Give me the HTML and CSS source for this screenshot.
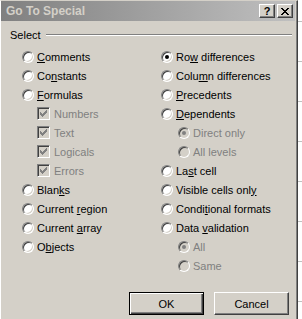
FILE: index.html
```html
<!DOCTYPE html>
<html>
<head>
<meta charset="utf-8">
<link rel="stylesheet" href="styles.css">
</head>
<body>
<div class="dialog">
  <div class="titlebar">
    <span class="title">Go To Special</span>
    <div class="tbtns">
      <span class="tbtn help">?</span>
      <span class="tbtn close">
        <svg width="8" height="7" viewBox="0 0 8 7" shape-rendering="crispEdges"><path d="M0 0h2v1H0zM6 0h2v1H6zM1 1h2v1H1zM5 1h2v1H5zM2 2h4v1H2zM3 3h2v1H3zM2 4h4v1H2zM1 5h2v1H1zM5 5h2v1H5zM0 6h2v1H0zM6 6h2v1H6z" fill="#000"/></svg>
      </span>
    </div>
  </div>
  <div class="legend"><span class="legend-text">Select</span><span class="rule"></span></div>
  <div class="cols">
    <div class="col">
      <div class="opt"><span class="radio"></span><span><u>C</u>omments</span></div>
      <div class="opt"><span class="radio"></span><span>Co<u>n</u>stants</span></div>
      <div class="opt"><span class="radio"></span><span><u>F</u>ormulas</span></div>
      <div class="opt sub dis"><span class="check"><svg width="7" height="7" viewBox="0 0 7 7" shape-rendering="crispEdges"><path d="M6 0h1v1H6zM5 1h2v1H5zM0 2h1v1H0zM4 2h3v1H4zM0 3h2v1H0zM3 3h3v1H3zM0 4h5v1H0zM1 5h3v1H1zM2 6h1v1H2z" fill="#808080"/></svg></span><span>Numbers</span></div>
      <div class="opt sub dis"><span class="check"><svg width="7" height="7" viewBox="0 0 7 7" shape-rendering="crispEdges"><path d="M6 0h1v1H6zM5 1h2v1H5zM0 2h1v1H0zM4 2h3v1H4zM0 3h2v1H0zM3 3h3v1H3zM0 4h5v1H0zM1 5h3v1H1zM2 6h1v1H2z" fill="#808080"/></svg></span><span>Text</span></div>
      <div class="opt sub dis"><span class="check"><svg width="7" height="7" viewBox="0 0 7 7" shape-rendering="crispEdges"><path d="M6 0h1v1H6zM5 1h2v1H5zM0 2h1v1H0zM4 2h3v1H4zM0 3h2v1H0zM3 3h3v1H3zM0 4h5v1H0zM1 5h3v1H1zM2 6h1v1H2z" fill="#808080"/></svg></span><span>Logicals</span></div>
      <div class="opt sub dis"><span class="check"><svg width="7" height="7" viewBox="0 0 7 7" shape-rendering="crispEdges"><path d="M6 0h1v1H6zM5 1h2v1H5zM0 2h1v1H0zM4 2h3v1H4zM0 3h2v1H0zM3 3h3v1H3zM0 4h5v1H0zM1 5h3v1H1zM2 6h1v1H2z" fill="#808080"/></svg></span><span>Errors</span></div>
      <div class="opt"><span class="radio"></span><span>Blan<u>k</u>s</span></div>
      <div class="opt"><span class="radio"></span><span>Current <u>r</u>egion</span></div>
      <div class="opt"><span class="radio"></span><span>Current <u>a</u>rray</span></div>
      <div class="opt"><span class="radio"></span><span>O<u>b</u>jects</span></div>
    </div>
    <div class="col">
      <div class="opt"><span class="radio on"></span><span>Ro<u>w</u> differences</span></div>
      <div class="opt"><span class="radio"></span><span>Colu<u>m</u>n differences</span></div>
      <div class="opt"><span class="radio"></span><span><u>P</u>recedents</span></div>
      <div class="opt"><span class="radio"></span><span><u>D</u>ependents</span></div>
      <div class="opt subr dis"><span class="radio on"></span><span>Direct only</span></div>
      <div class="opt subr dis"><span class="radio"></span><span>All levels</span></div>
      <div class="opt"><span class="radio"></span><span>La<u>s</u>t cell</span></div>
      <div class="opt"><span class="radio"></span><span>Visible cells onl<u>y</u></span></div>
      <div class="opt"><span class="radio"></span><span>Condi<u>t</u>ional formats</span></div>
      <div class="opt"><span class="radio"></span><span>Data <u>v</u>alidation</span></div>
      <div class="opt subr dis"><span class="radio on"></span><span>All</span></div>
      <div class="opt subr dis"><span class="radio"></span><span>Same</span></div>
    </div>
  </div>
  <div class="buttons">
    <button class="btn default">OK</button>
    <button class="btn">Cancel</button>
  </div>
</div>
</body>
</html>
```
FILE: styles.css
```css
html, body {
  margin: 0;
  padding: 0;
}
body {
  width: 302px;
  height: 319px;
  overflow: hidden;
  background: #fff repeating-linear-gradient(to bottom, transparent 0, transparent 21px, #c0c0c0 21px, #c0c0c0 22px, transparent 22px, transparent 40px);
  font-family: "Liberation Sans", Arial, sans-serif;
  font-size: 11px;
  color: #000;
}
.dialog {
  box-sizing: border-box;
  width: 298px;
  height: 330px;
  background: #d4d0c8;
  border-top: 1px solid #d4d0c8;
  border-left: 1px solid #fff;
  border-right: 1px solid #404040;
  box-shadow: inset -1px 0 #808080;
  display: flex;
  flex-direction: column;
}
.titlebar {
  height: 20px;
  margin-right: 2px;
  background: linear-gradient(to right, #808080, #c0c0c0);
  display: flex;
  align-items: center;
  justify-content: space-between;
  padding-left: 5px;
  padding-right: 2px;
}
.title {
  color: #d4d0c8;
  font-weight: bold;
  font-size: 12px;
  font-family: "Liberation Sans", Arial, sans-serif;
}
.tbtns {
  display: flex;
  gap: 2px;
}
.tbtn {
  box-sizing: border-box;
  width: 16px;
  height: 14px;
  background: #d4d0c8;
  border-top: 1px solid #fff;
  border-left: 1px solid #fff;
  border-right: 1px solid #404040;
  border-bottom: 1px solid #404040;
  box-shadow: inset -1px -1px #808080;
  display: flex;
  align-items: center;
  justify-content: center;
}
.help {
  font-weight: bold;
  font-size: 11px;
  line-height: 11px;
}
.legend {
  display: flex;
  align-items: center;
  height: 14px;
  margin-top: 7px;
  padding-left: 9px;
  padding-right: 5px;
}
.legend-text {
  margin-right: 5px;
}
.rule {
  flex: 1;
  height: 0;
  border-top: 1px solid #808080;
  border-bottom: 1px solid #fff;
}
.cols {
  display: grid;
  grid-template-columns: 139px 1fr;
  padding-left: 21px;
  margin-top: 5px;
}
.col {
  display: flex;
  flex-direction: column;
}
.opt {
  height: 19px;
  display: flex;
  align-items: center;
  gap: 3px;
  white-space: nowrap;
}
.opt u {
  text-decoration: underline;
  text-underline-offset: 1px;
}
.sub {
  padding-left: 15px;
  gap: 4px;
}
.subr {
  padding-left: 17px;
}
.dis {
  color: #808080;
}
.radio {
  box-sizing: border-box;
  width: 12px;
  height: 12px;
  border-radius: 50%;
  background: #fff;
  border: 1px solid;
  border-color: #808080 #fff #fff #808080;
  box-shadow: inset 1px 1px #404040, inset -1px -1px #d4d0c8;
  flex: none;
  display: flex;
  align-items: center;
  justify-content: center;
}
.radio.on::after {
  content: "";
  width: 4px;
  height: 4px;
  border-radius: 50%;
  background: #000;
}
.dis .radio {
  background: #d4d0c8;
}
.dis .radio.on::after {
  background: #808080;
}
.check {
  box-sizing: border-box;
  width: 13px;
  height: 13px;
  background: #d4d0c8;
  border: 1px solid;
  border-color: #808080 #fff #fff #808080;
  box-shadow: inset 1px 1px #404040, inset -1px -1px #d4d0c8;
  flex: none;
  display: flex;
  align-items: center;
  justify-content: center;
}
.buttons {
  display: flex;
  gap: 10px;
  justify-content: flex-end;
  padding-right: 8px;
  margin-top: 17px;
}
.btn {
  box-sizing: border-box;
  width: 75px;
  height: 23px;
  font-family: "Liberation Sans", Arial, sans-serif;
  font-size: 11px;
  color: #000;
  background: #d4d0c8;
  border-top: 1px solid #fff;
  border-left: 1px solid #fff;
  border-right: 1px solid #404040;
  border-bottom: 1px solid #404040;
  box-shadow: inset -1px -1px #808080;
  padding: 0;
}
.btn.default {
  border: 1px solid #000;
  box-shadow: inset 1px 1px #fff, inset -1px -1px #404040, inset -2px -2px #808080;
}
```
